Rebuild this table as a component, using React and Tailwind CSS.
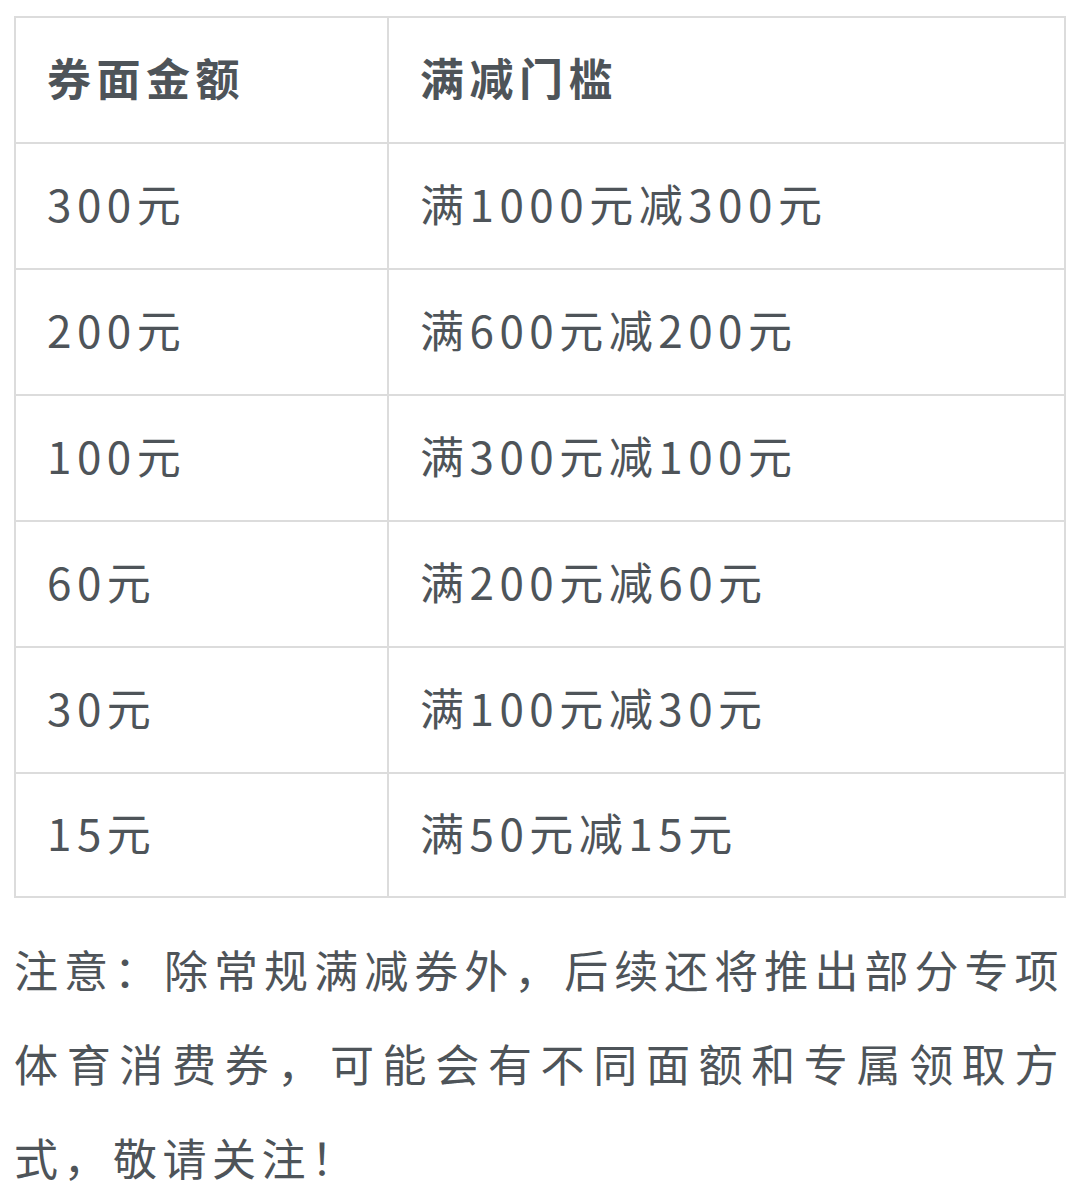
import React from 'react'

const rows = [
    ['300元', '满1000元减300元'],
    ['200元', '满600元减200元'],
    ['100元', '满300元减100元'],
    ['60元', '满200元减60元'],
    ['30元', '满100元减30元'],
    ['15元', '满50元减15元'],
]

const App = () => {
    return (
        <div className="bg-white min-h-[1191px] pt-[16px] px-[14px] text-[#4e5459] font-['Noto_Sans_CJK_SC','Noto_Sans',sans-serif]">
            <div className="border-2 border-[#dcdcdc] w-[1052px]">
                <div className="flex h-[126px] border-b-2 border-[#dcdcdc]">
                    <div className="w-[373px] border-r-2 border-[#dcdcdc] flex items-center pl-[31px] pb-[6px] text-[44px] font-bold tracking-[5.5px]">
                        券面金额
                    </div>
                    <div className="flex-1 flex items-center pl-[31px] pb-[6px] text-[44px] font-bold tracking-[5.5px]">
                        满减门槛
                    </div>
                </div>
                {rows.map((row, index) => (
                    <div
                        key={index}
                        className={`flex ${index < rows.length - 1 ? "h-[126px] border-b-2 border-[#dcdcdc]" : "h-[122px]"}`}
                    >
                        <div className="w-[373px] border-r-2 border-[#dcdcdc] flex items-center pl-[31px] pb-[6px] text-[44px] tracking-[5.5px]">
                            {row[0]}
                        </div>
                        <div className="flex-1 flex items-center pl-[31px] pb-[6px] text-[44px] tracking-[5.5px]">
                            {row[1]}
                        </div>
                    </div>
                ))}
            </div>
            <p className="mt-[24px] w-[1050px] text-[44px] leading-[94px] tracking-[5.5px] text-justify">
                注意：除常规满减券外，后续还将推出部分专项体育消费券，可能会有不同面额和专属领取方式，敬请关注！
            </p>
        </div>
    )
}

export default App
